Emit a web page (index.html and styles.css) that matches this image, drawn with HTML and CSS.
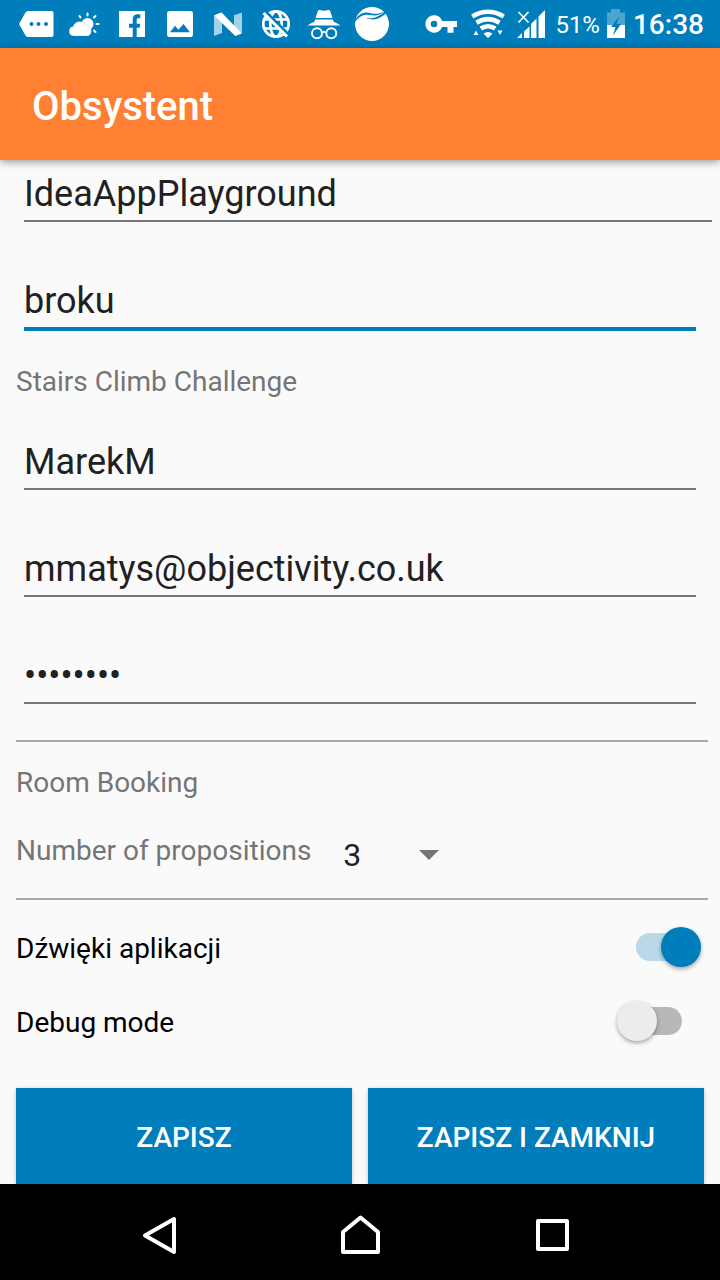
FILE: index.html
```html
<!DOCTYPE html>
<html lang="pl">
<head>
<meta charset="utf-8">
<meta name="viewport" content="width=device-width, initial-scale=1">
<title>Obsystent</title>
<link rel="stylesheet" href="styles.css">
</head>
<body>
<div class="status">
  <div class="status-left">
    <svg class="note" viewBox="0 0 40 48"><path fill="#fff" d="M12 11h23.500a2 2 0 0 1 2 2v22a2 2 0 0 1-2 2H12q-1.500 0-2.500-1.500L3 24l6.500-11.500Q10.500 11 12 11z"/><g fill="#007dbb"><circle cx="15.500" cy="24" r="2"/><circle cx="22.500" cy="24" r="2"/><circle cx="30" cy="24" r="2"/></g></svg>
    <svg class="note" viewBox="0 0 40 48"><circle cx="23.500" cy="24" r="6" fill="#fff"/><path d="M23.500 13.500v2M15.500 16l1 1.500M31.500 16l-1.500 1.500M32.500 24h2M30 30.500l1.500 1.500" stroke="#fff" stroke-width="2" stroke-linecap="round"/><path d="M9.500 36a4.800 4.800 0 0 1-.5-9.500 7.500 7.500 0 0 1 13.500-1.500 6 6 0 0 1 2 11z" fill="#fff" stroke="#007dbb" stroke-opacity=".3" stroke-width=".6"/></svg>
    <svg class="note" viewBox="0 0 40 48"><path fill="#fff" d="M7 11h26v26H7z"/><path fill="#007dbb" d="M20.700 37v-9.300H17v-4h3.700V20c0-4 2-5.700 5-5.700h2.600v3.900H26c-1 0-1.300.6-1.300 1.800v3.700h3.600l-.6 4h-3V37z"/></svg>
    <svg class="note" viewBox="0 0 40 48"><rect x="7" y="11" width="26" height="26" rx="2.800" fill="#fff"/><path fill="#007dbb" d="M10 32.300l5-6.500 3.400 4L23.500 24l6.500 8.300z"/></svg>
    <svg class="note" viewBox="0 0 40 48"><path fill="#a5d1e8" d="M6 15v21l8-3V21zM34 12.500l-8 2.800v13L34 33z"/><path fill="#fff" d="M6 15.300l6.500-2.600q1-.3 1.800.5L34 33.500l-6 2.200q-1 .3-1.800-.6z"/></svg>
    <svg class="note" viewBox="0 0 40 48"><g fill="none" stroke="#fff" stroke-width="2.700"><circle cx="20" cy="24" r="12.700"/><ellipse cx="20" cy="24" rx="5.700" ry="12.700"/><path d="M8.500 19.500h23M8.500 28.500h23"/></g><path d="M9 11l25 25" stroke="#007dbb" stroke-width="3"/><path d="M7.500 13L31 36.500" stroke="#fff" stroke-width="3"/></svg>
    <svg class="note" viewBox="0 0 40 48"><path fill="#fff" d="M14 10.500q.5-.8 1.500-.5l4.500.8 4.500-.8q1-.3 1.500.5l2.500 7.500H11.500zM11 19.500h18l.5 2.300q3.500 1 7 3.700h-33q3.500-2.700 7-3.700z"/><g fill="none" stroke="#fff" stroke-width="1.900"><circle cx="13" cy="33.300" r="5"/><circle cx="27.300" cy="33.300" r="5"/><path d="M18 32.500q2.200-1.200 4.400 0"/></g></svg>
    <svg class="note" viewBox="0 0 40 48"><circle cx="20" cy="24" r="17" fill="#fff"/><path fill="#007dbb" d="M3 20.500C7 13 13 11.500 19 13.300c4 1 8 .7 13.500-1.800C28 15.500 23 16 18 15 12 13.800 8 15.500 3 22zM13.500 17.800c6 1.200 12 .2 19.500-6.300l1.300 1.500c-6.500 6.500-13 8-20.800 4.800z"/></svg>
  </div>
  <div class="status-right">
    <svg class="key" viewBox="0 0 34 48"><path fill="#fff" fill-rule="evenodd" d="M10 15.300a8.700 8.700 0 1 0 8.200 11.700h5.300v5.800h6V27H33v-6H18.200A8.700 8.700 0 0 0 10 15.300zm0 5.400a3.300 3.300 0 1 1 0 6.600 3.300 3.300 0 0 1 0-6.600z"/></svg>
    <svg class="wifi" viewBox="0 0 36 48"><g fill="none" stroke="#fff" stroke-width="4.600"><path d="M2.300 16.500q15.700-9.500 31.400 0"/><path d="M6.500 22.700q11.500-7 23 0"/><path d="M10.800 28.500q7.200-4.500 14.400 0"/></g><path fill="#fff" d="M13.500 33.500q4.500-3 9 0L18 38.200zM3.500 35L6 30.500 8.500 35zM27.500 30.500h5L30 35z"/></svg>
    <svg class="signal" viewBox="0 0 30 48"><path fill="#fff" d="M1 38l5-5v5zM8 31.500l5.500-5V38H8zM15 24l5.500-5.500V38H15zM22.500 16.500L29 10v28h-6.500z"/><path d="M2.500 12l10 10.500M12.500 12L2.500 22.500" stroke="#fff" stroke-width="1.800"/></svg>
    <span class="percent">51%</span>
    <svg class="battery" viewBox="0 0 20 48"><path fill="#4da4cf" d="M1 12.500h4V9h9v3.500h5V25H1z"/><path fill="#fff" d="M1 25h18v13H1z"/><path fill="#007dbb" d="M13.500 16L5 27h4.500L7 35.500 15 24h-4.500z"/></svg>
    <span class="clock">16:38</span>
  </div>
</div>
<header class="appbar"><h1>Obsystent</h1></header>
<main class="settings">
  <div class="fields">
    <input class="field field-wide" type="text" aria-label="Projekt" value="IdeaAppPlayground">
    <input class="field field-active" type="text" aria-label="Użytkownik" value="broku">
  </div>
  <h2 class="section stairs">Stairs Climb Challenge</h2>
  <div class="fields">
    <input class="field" type="text" aria-label="Login" value="MarekM">
    <input class="field" type="email" aria-label="E-mail" value="mmatys@objectivity.co.uk">
    <input class="field" type="password" aria-label="Hasło" value="password">
  </div>
  <hr class="divider after-fields">
  <h2 class="section">Room Booking</h2>
  <div class="proposals">
    <label for="count">Number of propositions</label>
    <div class="spinner">
      <select id="count"><option>1</option><option>2</option><option selected>3</option><option>4</option><option>5</option></select>
      <svg class="caret" viewBox="0 0 20 10"><path fill="#757575" d="M0 0h20L10 10z"/></svg>
    </div>
  </div>
  <hr class="divider after-proposals">
  <div class="switches">
    <label class="switch-row"><span>Dźwięki aplikacji</span><input class="switch" type="checkbox" role="switch" checked></label>
    <label class="switch-row"><span>Debug mode</span><input class="switch" type="checkbox" role="switch"></label>
  </div>
  <div class="actions">
    <button type="button">ZAPISZ</button>
    <button type="button">ZAPISZ I ZAMKNIJ</button>
  </div>
</main>
<nav class="navbar">
  <button class="back" type="button" aria-label="Wstecz"><svg viewBox="0 0 40 40"><path d="M34 4v33L5 20.500z"/></svg></button>
  <button type="button" aria-label="Ekran główny"><svg viewBox="0 0 40 40"><path d="M3 37V17L20.500 2.500 38 17v20z"/></svg></button>
  <button type="button" aria-label="Ostatnie"><svg viewBox="0 0 40 40"><path d="M6 6h29v28H6z"/></svg></button>
</nav>
</body>
</html>
```
FILE: styles.css
```css
* { box-sizing: border-box; }

body {
  margin: 0;
  min-height: 100vh;
  display: flex;
  flex-direction: column;
  background: #fafafa;
  color: #212121;
  font-family: Roboto, sans-serif;
}

h1, h2 { margin: 0; }
svg { display: block; flex: none; }
input, select, button { font-family: inherit; margin: 0; border: 0; outline: 0; }

.status {
  display: flex;
  justify-content: space-between;
  height: 48px;
  padding: 0 16px;
  background: #007dbb;
  color: #fff;
}
.status-left { display: flex; gap: 8px; }
.status-right { display: flex; align-items: center; gap: 10px; white-space: nowrap; }
.note { width: 40px; height: 48px; }
.key { width: 34px; height: 48px; margin-right: 2px; }
.wifi { width: 36px; height: 48px; }
.signal { width: 30px; height: 48px; }
.battery { width: 20px; height: 48px; margin-left: -4px; }
.percent { padding-top: 2px; font-size: 24px; line-height: 46px; margin-left: -1px; }
.clock { padding-top: 2px; font-size: 28px; line-height: 46px; font-weight: 500; margin-left: -3px; }

.appbar {
  position: relative;
  display: flex;
  align-items: center;
  height: 112px;
  padding: 6px 32px 0;
  background: #ff8033;
  color: #fff;
  box-shadow: 0 2px 8px rgba(0, 0, 0, 0.4);
}
.appbar h1 { font-size: 40px; line-height: 48px; font-weight: 500; }

.settings {
  flex: 1;
  display: flex;
  flex-direction: column;
  padding: 8px 16px 0;
}
.fields {
  display: flex;
  flex-direction: column;
  gap: 53px;
  padding: 0 8px;
}
.field {
  height: 54px;
  padding: 0;
  border-bottom: 2px solid #757575;
  border-radius: 0;
  background: transparent;
  color: #212121;
  font-size: 36px;
}
.field-wide { margin-right: -16px; }
.field-active { height: 56px; border-bottom: 4px solid #007dbb; }

.section {
  color: #757575;
  font-size: 28px;
  line-height: 32px;
  font-weight: 400;
}
.stairs { margin: 35px 0 38px; }
.divider {
  width: auto;
  height: 2px;
  margin: 0 -4px 0 0;
  border: 0;
  background: #a9a9a9;
}
.after-fields { margin-top: 36px; margin-bottom: 25px; }
.after-proposals { margin-top: 23px; margin-bottom: 20px; }

.proposals {
  display: flex;
  align-items: flex-start;
  gap: 24px;
  margin-top: 36px;
  color: #757575;
  font-size: 28px;
  line-height: 32px;
}
.spinner { position: relative; width: 112px; }
.spinner select {
  display: block;
  width: 100%;
  height: 40px;
  padding: 0 32px 0 8px;
  appearance: none;
  background: transparent;
  color: #212121;
  font-size: 32px;
}
.caret {
  position: absolute;
  right: 8px;
  top: 15px;
  width: 20px;
  height: 10px;
  pointer-events: none;
}

.switches { display: grid; gap: 20px; }
.switch-row {
  display: flex;
  align-items: center;
  justify-content: space-between;
  height: 54px;
  color: #000;
  font-size: 28px;
}
.switch-row span { padding-top: 2px; }
.switch {
  position: relative;
  width: 90px;
  height: 48px;
  appearance: none;
}
.switch::before {
  content: "";
  position: absolute;
  left: 22px;
  top: 10px;
  width: 46px;
  height: 28px;
  border-radius: 14px;
  background: #b8b8b8;
}
.switch::after {
  content: "";
  position: absolute;
  left: 3px;
  top: 4px;
  width: 40px;
  height: 40px;
  border-radius: 50%;
  background: #ececec;
  box-shadow: 0 2px 4px rgba(0, 0, 0, 0.35);
}
.switch:checked::before { background: #b9d9e9; }
.switch:checked::after { left: 47px; background: #007dbb; }

.actions {
  display: grid;
  grid-template-columns: 1fr 1fr;
  gap: 16px;
  margin-top: 40px;
}
.actions button {
  height: 96px;
  padding: 2px 0 0;
  background: #007dbb;
  color: #fff;
  font-size: 28px;
  font-weight: 500;
  box-shadow: 0 1px 4px rgba(0, 0, 0, 0.25);
}

.navbar {
  position: relative;
  display: flex;
  justify-content: center;
  gap: 152px;
  height: 96px;
  padding-top: 31px;
  background: #000;
}
.navbar button { width: 40px; height: 40px; padding: 0; background: transparent; }
.navbar .back { margin: 0 8px 0 -8px; }
.navbar svg {
  width: 40px;
  height: 40px;
  fill: none;
  stroke: #fff;
  stroke-width: 4;
  stroke-linejoin: round;
}
```
